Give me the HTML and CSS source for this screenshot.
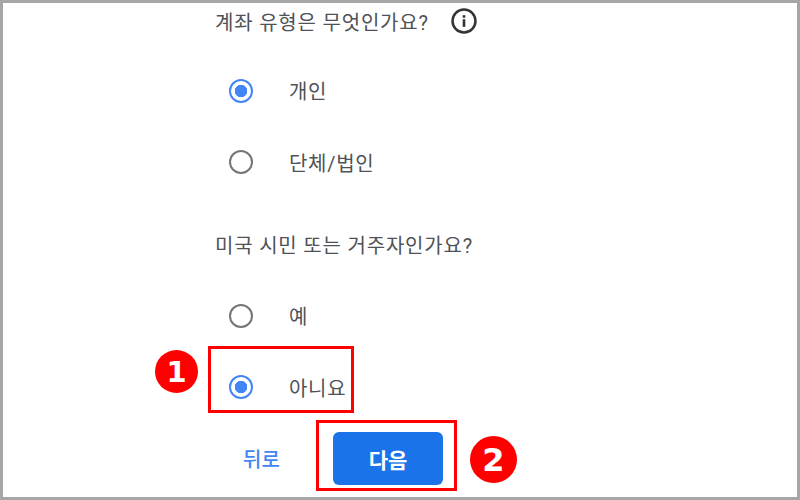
FILE: index.html
```html
<!DOCTYPE html>
<html lang="ko">
<head>
  <meta charset="UTF-8" />
  <title>계좌 유형</title>
  <link rel="stylesheet" href="styles.css">
</head>
<body>
  <div class="frame">
    <div class="question question-first">
      <span>계좌 유형은 무엇인가요?</span>
      <svg class="info-icon" viewBox="0 0 24 24" width="26" height="26" aria-hidden="true">
        <circle cx="12" cy="12" r="10.6" fill="none" stroke="#333" stroke-width="2.3"/>
        <rect x="10.8" y="10.4" width="2.4" height="7" fill="#333"/>
        <rect x="10.8" y="6.6" width="2.4" height="2.4" fill="#333"/>
      </svg>
    </div>
    <div class="options options-first">
      <div class="option"><span class="radio checked"></span><span>개인</span></div>
      <div class="option"><span class="radio"></span><span>단체/법인</span></div>
    </div>
    <div class="question question-second"><span>미국 시민 또는 거주자인가요?</span></div>
    <div class="options options-second">
      <div class="option"><span class="radio"></span><span>예</span></div>
      <div class="option"><span class="radio checked"></span><span>아니요</span></div>
    </div>
    <div class="actions">
      <button class="btn-back">뒤로</button>
      <button class="btn-next">다음</button>
    </div>

    <div class="mark mark-option"></div>
    <div class="mark mark-next"></div>
    <div class="badge badge-one">1</div>
    <div class="badge badge-two">2</div>
  </div>
</body>
</html>
```

FILE: styles.css
```css
* {
  box-sizing: border-box;
}

body {
  margin: 0;
  background: #fff;
  font-family: "Roboto", "Noto Sans CJK KR", sans-serif;
  color: #4f5257;
}

.frame {
  position: relative;
  width: 800px;
  height: 500px;
  border: 3px solid #a6a6a6;
  padding-left: 212px;
  overflow: hidden;
}

.question {
  display: flex;
  align-items: center;
  height: 36px;
  font-size: 20px;
  letter-spacing: 0.8px;
}

.question-second {
  margin-top: 28px;
}

.info-icon {
  margin-left: 22px;
}

.options-first {
  margin-top: 16px;
}

.options-second {
  margin-top: 18px;
}

.option {
  display: flex;
  align-items: center;
  gap: 36px;
  height: 71.5px;
  padding-left: 14px;
  font-size: 20px;
  letter-spacing: 0.7px;
}

.radio {
  display: block;
  flex: none;
  width: 24px;
  height: 24px;
  border: 2px solid #757575;
  border-radius: 50%;
}

.radio.checked {
  border-color: #4285f4;
  background: radial-gradient(circle, #4285f4 0 6px, transparent 6.5px);
}

.actions {
  display: flex;
  align-items: center;
  margin-top: 9px;
}

.btn-back {
  margin-left: 27px;
  padding: 0;
  width: 39px;
  border: none;
  background: none;
  font: inherit;
  font-size: 20px;
  font-weight: 500;
  color: #4285f4;
}

.btn-next {
  margin-left: 52px;
  width: 110px;
  height: 53px;
  border: none;
  border-radius: 6px;
  background: #1a73e8;
  color: #fff;
  font: inherit;
  font-size: 21px;
  font-weight: 700;
}

/* red annotations over the form */
.mark {
  position: absolute;
  border: 3px solid #f00;
}

.mark-option {
  left: 205px;
  top: 343px;
  width: 146px;
  height: 67px;
}

.mark-next {
  left: 313px;
  top: 417px;
  width: 141px;
  height: 71px;
}

.badge {
  position: absolute;
  display: flex;
  align-items: center;
  justify-content: center;
  border-radius: 50%;
  background: #f00;
  color: #fff;
  font-family: "DejaVu Sans", sans-serif;
  font-weight: 700;
}

.badge-one {
  left: 152px;
  top: 347px;
  width: 43px;
  height: 43px;
  font-size: 29px;
}

.badge-two {
  left: 467px;
  top: 433px;
  width: 47px;
  height: 47px;
  font-size: 32px;
}
```
